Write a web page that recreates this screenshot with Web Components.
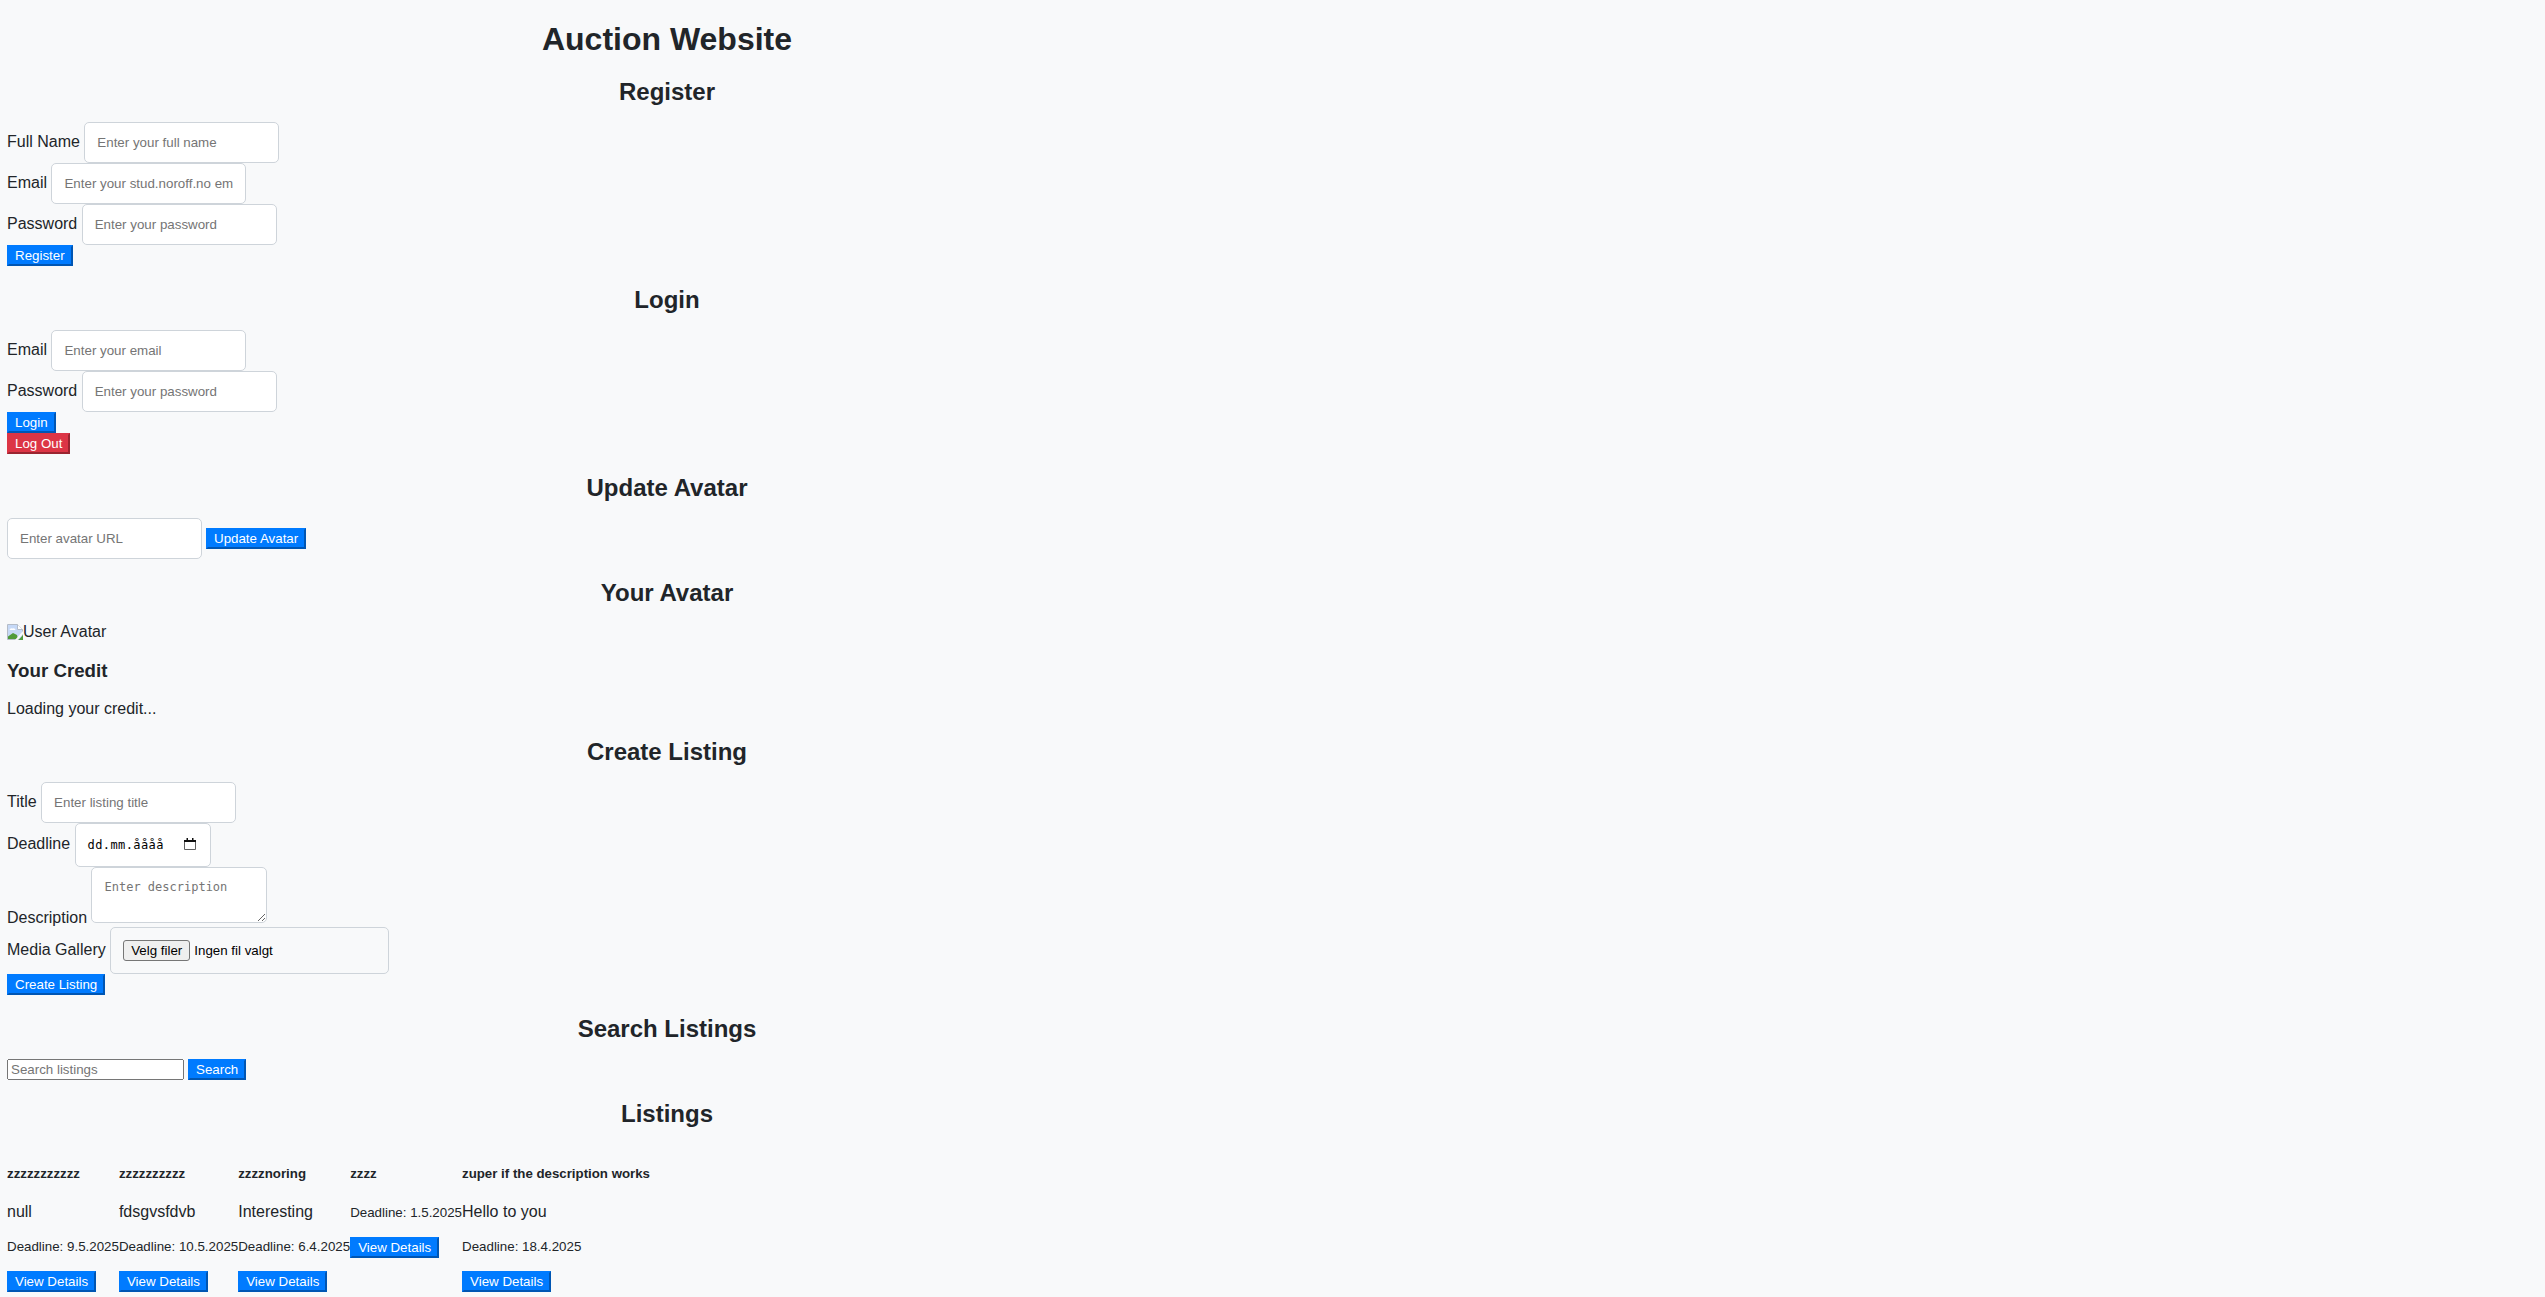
<!DOCTYPE html>
<html lang="no">
<head>
<meta charset="utf-8">
<title>Auction Website</title>
<style>
html, body { margin: 0; padding: 0; }
body {
  background: #f8f9fa;
  color: #212529;
  font-family: "Liberation Sans", Arial, sans-serif;
}
</style>
</head>
<body>
<auction-app></auction-app>

<template id="section-tpl">
  <style>
    :host { display: block; }
    h2 {
      font-size: 24px;
      font-weight: bold;
      line-height: 27px;
      text-align: center;
      margin: 20px 0 17px;
    }
  </style>
  <h2></h2>
  <slot></slot>
</template>

<template id="field-tpl">
  <style>
    :host { display: block; font-size: 16px; }
    input, textarea {
      padding: 12px;
      border: 1px solid #ced4da;
      border-radius: 5px;
      background: #fff;
      width: 169px;
      box-sizing: content-box;
      color: #212529;
      font: 13.33px "Liberation Sans", Arial, sans-serif;
      outline: none;
      margin: 0;
    }
    textarea {
      width: 150px;
      height: 30px;
      font: 12px/15px "DejaVu Sans Mono", monospace;
    }
    .date {
      display: inline-flex;
      align-items: baseline;
      width: 110px;
      height: 18px;
      padding: 12px;
      border: 1px solid #ced4da;
      border-radius: 5px;
      background: #fff;
      color: #000;
      font: 12px/18px "DejaVu Sans Mono", monospace;
      letter-spacing: .4px;
      position: relative;
    }
    .date svg { position: absolute; right: 14px; top: 14px; }
    .file {
      display: inline-flex;
      align-items: baseline;
      width: 253px;
      padding: 12px;
      border: 1px solid #ced4da;
      border-radius: 5px;
      font: 13.33px "Liberation Sans", Arial, sans-serif;
      color: #000;
    }
    .file button {
      font: inherit;
      color: #000;
      background: #efefef;
      border: 1px solid #767676;
      border-radius: 3px;
      padding: 2px 7px;
      margin: 0 4px 0 0;
    }
  </style>
  <label></label>
  <span id="ctl"></span>
</template>

<script>
class AuctionButton extends HTMLElement {
  constructor() {
    super();
    this.attachShadow({ mode: "open" });
    this.shadowRoot.innerHTML = `
    <style>
      :host { display: inline-block; }
      button {
        font: 13.33px "Liberation Sans", Arial, sans-serif;
        color: #fff;
        background: #007bff;
        border: 2px solid;
        border-color: #007bff #0056b3 #0056b3 #007bff;
        padding: 1px 6px;
        margin: 0;
        vertical-align: baseline;
      }
      :host([danger]) button {
        background: #dc3545;
        border-color: #dc3545 #9a2530 #9a2530 #dc3545;
      }
    </style>
    <button><slot></slot></button>
    `;
  }
}
customElements.define("auction-button", AuctionButton);

class AuctionSection extends HTMLElement {
  constructor() {
    super();
    this.attachShadow({ mode: "open" });
    this.shadowRoot.appendChild(document.getElementById("section-tpl").content.cloneNode(true));
    this.shadowRoot.querySelector("h2").textContent = this.getAttribute("heading");
  }
}
customElements.define("auction-section", AuctionSection);

class AuctionField extends HTMLElement {
  constructor() {
    super();
    this.attachShadow({ mode: "open" });
    this.shadowRoot.appendChild(document.getElementById("field-tpl").content.cloneNode(true));
    this.shadowRoot.querySelector("label").textContent = this.getAttribute("label");
    var type = this.getAttribute("type") || "text";
    var hint = this.getAttribute("hint") || "";
    var ctl = this.shadowRoot.querySelector("#ctl");
    // date and file inputs follow the browser locale, so these two are drawn by hand
    if (type === "textarea") {
      ctl.innerHTML = `<textarea placeholder="${hint}"></textarea>`;
    } else if (type === "date") {
      ctl.innerHTML = `<span class="date">dd.mm.åååå<svg width="12" height="12" viewBox="0 0 12 12"><path d="M.5 2.500h11v9H.5z" fill="#fff" stroke="#5f5f5f"/><path d="M0 2h12v2H0zM2.500 0h1.500v2H2.500zM8 0h1.500v2H8z" fill="#111"/></svg></span>`;
    } else if (type === "file") {
      ctl.innerHTML = `<span class="file"><button type="button">Velg filer</button>Ingen fil valgt</span>`;
    } else {
      ctl.innerHTML = `<input type="${type}" placeholder="${hint}">`;
    }
  }
}
customElements.define("auction-field", AuctionField);

class ListingCard extends HTMLElement {
  constructor() {
    super();
    this.attachShadow({ mode: "open" });
    this.shadowRoot.innerHTML = `
    <style>
      :host { display: block; }
      h5 { font-size: 13.28px; margin: 21.18px 0 22.18px; font-weight: bold; white-space: nowrap; }
      p { margin: 16px 0; font-size: 16px; white-space: nowrap; }
      small { font-size: 13.33px; }
    </style>
    <h5 id="name"></h5>
    <p id="desc"></p>
    <p><small id="deadline"></small></p>
    <auction-button>View Details</auction-button>
    `;
    this.shadowRoot.querySelector("#name").textContent = this.getAttribute("name");
    var desc = this.shadowRoot.querySelector("#desc");
    if (this.hasAttribute("desc")) desc.textContent = this.getAttribute("desc");
    else desc.remove();
    this.shadowRoot.querySelector("#deadline").textContent = "Deadline: " + this.getAttribute("deadline");
  }
}
customElements.define("listing-card", ListingCard);

class AuctionApp extends HTMLElement {
  constructor() {
    super();
    this.attachShadow({ mode: "open" });
    this.shadowRoot.innerHTML = `
    <style>
      :host { display: block; width: 1320px; padding: 0 7px; font-size: 16px; }
      h1 { font-size: 32px; line-height: 37px; text-align: center; margin: 21px 0 20px; }
      h3 { font-size: 18.72px; line-height: 22px; margin: 18.72px 0; }
      p { margin: 16px 0; }
      input { font: 13.33px "Liberation Sans", Arial, sans-serif; margin: 0; }
      .avatar-url { display: flex; align-items: center; gap: 4px; }
      .avatar-url input { padding: 12px; border: 1px solid #ced4da; border-radius: 5px; width: 169px; background: #fff; outline: none; }
      .search { display: flex; align-items: center; gap: 4px; }
      .search input { width: 169px; }
      .listings { display: flex; align-items: flex-start; }
      .avatar { line-height: 18px; }
      .broken { display: inline-block; width: 16px; height: 16px; vertical-align: -3px; }
    </style>
    <h1>Auction Website</h1>

    <auction-section heading="Register">
      <auction-field label="Full Name" hint="Enter your full name"></auction-field>
      <auction-field label="Email" type="email" hint="Enter your stud.noroff.no email"></auction-field>
      <auction-field label="Password" type="password" hint="Enter your password"></auction-field>
      <auction-button>Register</auction-button>
    </auction-section>

    <auction-section heading="Login">
      <auction-field label="Email" type="email" hint="Enter your email"></auction-field>
      <auction-field label="Password" type="password" hint="Enter your password"></auction-field>
      <div><auction-button>Login</auction-button></div>
      <div><auction-button danger>Log Out</auction-button></div>
    </auction-section>

    <auction-section heading="Update Avatar">
      <div class="avatar-url"><input placeholder="Enter avatar URL"><auction-button>Update Avatar</auction-button></div>
    </auction-section>

    <auction-section heading="Your Avatar">
      <div class="avatar"><svg class="broken" viewBox="0 0 16 16"><path d="M.5.5h10l5 5v10H.5z" fill="#c6d9f7" stroke="#b4bcc8"/><path d="M2.500 6a2 2 0 0 1 3-1.500A2 2 0 0 1 8.500 6z" fill="#fff"/><path d="M1 15v-2.500L6 9l4 2 1 4z" fill="#4f9a3a"/><path d="M10.500 .5v5h5" fill="#fff" stroke="#b4bcc8"/><path d="M16 7 8 16h2.500L16 10z" fill="#f8f9fa"/><path d="M16 11v5h-4.500z" fill="#4f9a3a"/></svg>User Avatar</div>
      <h3>Your Credit</h3>
      <p>Loading your credit...</p>
    </auction-section>

    <auction-section heading="Create Listing">
      <auction-field label="Title" hint="Enter listing title"></auction-field>
      <auction-field label="Deadline" type="date"></auction-field>
      <auction-field label="Description" type="textarea" hint="Enter description"></auction-field>
      <auction-field label="Media Gallery" type="file"></auction-field>
      <auction-button>Create Listing</auction-button>
    </auction-section>

    <auction-section heading="Search Listings">
      <div class="search"><input placeholder="Search listings"><auction-button>Search</auction-button></div>
    </auction-section>

    <auction-section heading="Listings">
      <div class="listings">
        <listing-card name="zzzzzzzzzzz" desc="null" deadline="9.5.2025"></listing-card>
        <listing-card name="zzzzzzzzzz" desc="fdsgvsfdvb" deadline="10.5.2025"></listing-card>
        <listing-card name="zzzznoring" desc="Interesting" deadline="6.4.2025"></listing-card>
        <listing-card name="zzzz" deadline="1.5.2025"></listing-card>
        <listing-card name="zuper if the description works" desc="Hello to you" deadline="18.4.2025"></listing-card>
      </div>
    </auction-section>
    `;
  }
}
customElements.define("auction-app", AuctionApp);
</script>
</body>
</html>
